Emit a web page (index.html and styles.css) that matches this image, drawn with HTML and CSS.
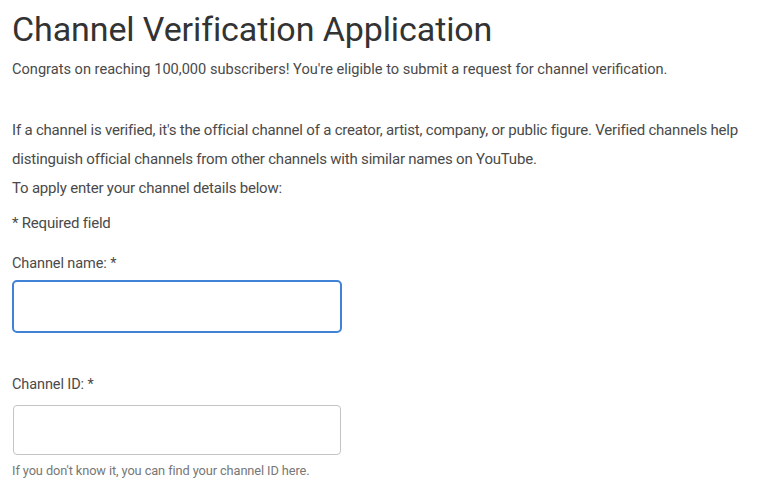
FILE: index.html
```html
<!DOCTYPE html>
<html>
<head>
<meta charset="utf-8">
<link rel="stylesheet" href="styles.css">
</head>
<body>
<main class="page">
  <h1 class="title">Channel Verification Application</h1>
  <p class="lead">Congrats on reaching 100,000 subscribers! You're eligible to submit a request for channel verification.</p>
  <p class="text intro">If a channel is verified, it's the official channel of a creator, artist, company, or public figure. Verified channels help distinguish official channels from other channels with similar names on YouTube.</p>
  <p class="text apply">To apply enter your channel details below:</p>
  <p class="text req">* Required field</p>
  <div class="field first">
    <label class="label">Channel name: *</label>
    <div class="input focused"></div>
  </div>
  <div class="field second">
    <label class="label">Channel ID: *</label>
    <div class="input"></div>
    <p class="hint">If you don't know it, you can find your channel ID here.</p>
  </div>
</main>
</body>
</html>
```
FILE: styles.css
```css
html, body { margin: 0; background: #fff; }
body { font-family: Roboto, "Noto Sans", sans-serif; color: #555; }
.page { padding: 9px 12px 0 12px; }
.title { margin: 0; font-weight: 400; font-size: 34px; line-height: 40px; color: #333; letter-spacing: -0.1px; }
.lead { margin: 10px 0 0; font-size: 14.6px; line-height: 20px; letter-spacing: 0; color: #4a4a4a; }
.text { margin: 0; font-size: 15px; line-height: 28px; letter-spacing: -0.2px; color: #4a4a4a; }
.intro { margin-top: 37px; line-height: 29px; }
.apply { margin-top: 0; }
.req { margin-top: 7px; }
.field { display: flex; flex-direction: column; }
.first { margin-top: 17px; }
.second { margin-top: 42px; }
.label { font-size: 14.5px; line-height: 20px; color: #4a4a4a; letter-spacing: -0.1px; }
.input { box-sizing: border-box; width: 328px; height: 50px; margin-top: 10px; margin-left: 1px; border: 1px solid #c4c4c4; border-radius: 4px; }
.input.focused { width: 330px; height: 53px; margin-top: 6px; margin-left: 0; border: 2px solid #3f82d6; border-radius: 5px; }
.hint { margin: 8px 0 0; font-size: 12.8px; line-height: 16px; color: #777; letter-spacing: -0.1px; }
```
